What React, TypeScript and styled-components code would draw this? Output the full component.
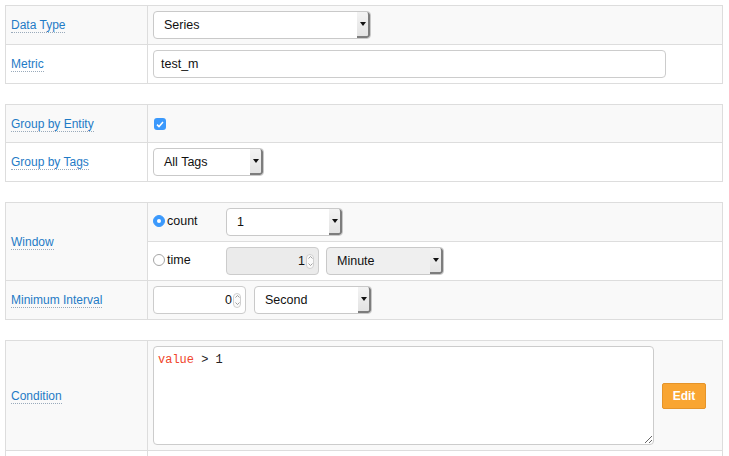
import styled, { createGlobalStyle } from "styled-components";

const GlobalStyle = createGlobalStyle`
  html, body {
    margin: 0;
    padding: 0;
    background: #ffffff;
    font-family: "Liberation Sans", Arial, sans-serif;
    font-size: 12px;
    color: #222;
  }
`;

const Page = styled.div`
  display: flex;
  flex-direction: column;
  gap: 20px;
  padding: 5px 6px 0 5px;
`;

const Table = styled.table`
  width: 100%;
  border-collapse: collapse;
  border: 1px solid #dddddd;
`;

const Row = styled.tr<{ $striped?: boolean }>`
  background: ${(p) => (p.$striped ? "#f9f9f9" : "#ffffff")};
`;

const LabelCell = styled.td`
  width: 131px;
  padding: 5px;
  border: 1px solid #dddddd;
  vertical-align: middle;
`;

const ValueCell = styled.td<{ $height?: number }>`
  padding: 5px;
  border: 1px solid #dddddd;
  vertical-align: middle;
  height: ${(p) => p.$height ?? 28}px;
`;

const Label = styled.span`
  color: #1f7bc6;
  border-bottom: 1px dotted #9ab;
  cursor: help;
`;

const Inline = styled.div<{ $gap?: number }>`
  display: flex;
  align-items: center;
  gap: ${(p) => p.$gap ?? 8}px;
`;

const SelectBox = styled.div<{ $width: number; $disabled?: boolean }>`
  width: ${(p) => p.$width}px;
  height: 28px;
  box-sizing: border-box;
  display: flex;
  align-items: stretch;
  border: 1px solid #c9c9c9;
  border-radius: 4px;
  background: ${(p) => (p.$disabled ? "#efefef" : "#ffffff")};
  overflow: hidden;
`;

const SelectText = styled.span`
  flex: 1;
  display: flex;
  align-items: center;
  padding-left: 10px;
  font-size: 12.5px;
  color: #111;
`;

const SelectArrow = styled.span`
  width: 11px;
  display: flex;
  align-items: center;
  justify-content: center;
  background: linear-gradient(#f3f3f3, #e3e3e3);
  border-right: 2px solid #7d7d7d;
  border-bottom: 2px solid #7d7d7d;
  border-radius: 0 3px 3px 0;

  &::after {
    content: "";
    border-left: 3px solid transparent;
    border-right: 3px solid transparent;
    border-top: 4px solid #111;
  }
`;

const TextInput = styled.div<{ $width: number }>`
  width: ${(p) => p.$width}px;
  height: 28px;
  box-sizing: border-box;
  display: flex;
  align-items: center;
  padding-left: 7px;
  border: 1px solid #cccccc;
  border-radius: 4px;
  background: #fff;
  font-size: 12.5px;
  color: #111;
`;

const NumberBox = styled.div<{ $width: number; $disabled?: boolean }>`
  width: ${(p) => p.$width}px;
  height: 28px;
  box-sizing: border-box;
  display: flex;
  align-items: center;
  justify-content: flex-end;
  gap: 1px;
  padding-right: 4px;
  border: 1px solid #cccccc;
  border-radius: 4px;
  background: ${(p) => (p.$disabled ? "#ebebeb" : "#ffffff")};
  font-size: 12.5px;
  color: #111;
`;

const Spinner = styled.span`
  width: 8px;
  height: 15px;
  box-sizing: border-box;
  border: 1px solid #d0d0d0;
  border-radius: 4px;
  display: flex;
  flex-direction: column;
  align-items: center;
  justify-content: space-around;
  background: #fafafa;
`;

const CheckBox = styled.span`
  width: 12px;
  height: 12px;
  border-radius: 3px;
  background: #3b99fc;
  display: inline-flex;
  align-items: center;
  justify-content: center;
  margin-left: 1px;
  vertical-align: middle;
`;

const RadioOption = styled.label`
  width: 73px;
  display: flex;
  align-items: center;
  gap: 2px;
  font-size: 12.5px;
  color: #111;
  margin-top: -3px;
`;

const RadioDot = styled.span<{ $checked?: boolean }>`
  width: 12px;
  height: 12px;
  box-sizing: border-box;
  border-radius: 50%;
  border: 1px solid ${(p) => (p.$checked ? "#3b99fc" : "#a5a5a5")};
  background: ${(p) => (p.$checked ? "#3b99fc" : "#ffffff")};
  display: flex;
  align-items: center;
  justify-content: center;

  &::after {
    content: "";
    width: 4px;
    height: 4px;
    border-radius: 50%;
    background: ${(p) => (p.$checked ? "#ffffff" : "transparent")};
  }
`;

const CodeArea = styled.div`
  width: 501px;
  height: 99px;
  box-sizing: border-box;
  padding: 6px 4px;
  border: 1px solid #cccccc;
  border-radius: 4px;
  background: #fff;
  font-family: "Liberation Mono", "Courier New", monospace;
  font-size: 12px;
  color: #222;
  resize: both;
  overflow: auto;
`;

const Keyword = styled.span`
  color: #f0452b;
`;

const EditButton = styled.button`
  width: 44px;
  height: 26px;
  border: 1px solid #e5942a;
  border-radius: 2px;
  background: #f9a532;
  color: #ffffff;
  font-family: "Liberation Sans", Arial, sans-serif;
  font-weight: 700;
  font-size: 12px;
  padding: 0;
`;

const SpinArrows = () => (
  <Spinner>
    <svg width="5" height="3" viewBox="0 0 5 3">
      <path d="M0.5 2.5 L2.5 0.5 L4.5 2.5" fill="none" stroke="#888" strokeWidth="0.8" />
    </svg>
    <svg width="5" height="3" viewBox="0 0 5 3">
      <path d="M0.5 0.5 L2.5 2.5 L4.5 0.5" fill="none" stroke="#888" strokeWidth="0.8" />
    </svg>
  </Spinner>
);

const Select = ({ value, width, disabled }: { value: string; width: number; disabled?: boolean }) => (
  <SelectBox $width={width} $disabled={disabled}>
    <SelectText>{value}</SelectText>
    <SelectArrow />
  </SelectBox>
);

const NumberInput = ({ value, width, disabled }: { value: string; width: number; disabled?: boolean }) => (
  <NumberBox $width={width} $disabled={disabled}>
    {value}
    <SpinArrows />
  </NumberBox>
);

const App = () => (
  <>
    <GlobalStyle />
    <Page>
      <Table>
        <tbody>
          <Row $striped>
            <LabelCell><Label>Data Type</Label></LabelCell>
            <ValueCell><Select value="Series" width={218} /></ValueCell>
          </Row>
          <Row>
            <LabelCell><Label>Metric</Label></LabelCell>
            <ValueCell><TextInput $width={513}>test_m</TextInput></ValueCell>
          </Row>
        </tbody>
      </Table>

      <Table>
        <tbody>
          <Row $striped>
            <LabelCell><Label>Group by Entity</Label></LabelCell>
            <ValueCell $height={27}>
              <CheckBox>
                <svg width="8" height="7" viewBox="0 0 8 7">
                  <path d="M1 3.6 L3 5.6 L7 1" fill="none" stroke="#fff" strokeWidth="1.5" />
                </svg>
              </CheckBox>
            </ValueCell>
          </Row>
          <Row>
            <LabelCell><Label>Group by Tags</Label></LabelCell>
            <ValueCell><Select value="All Tags" width={111} /></ValueCell>
          </Row>
        </tbody>
      </Table>

      <Table>
        <tbody>
          <Row $striped>
            <LabelCell rowSpan={2}><Label>Window</Label></LabelCell>
            <ValueCell>
              <Inline $gap={0}>
                <RadioOption><RadioDot $checked />count</RadioOption>
                <Select value="1" width={117} />
              </Inline>
            </ValueCell>
          </Row>
          <Row>
            <ValueCell>
              <Inline $gap={0}>
                <RadioOption><RadioDot />time</RadioOption>
                <Inline $gap={7}>
                  <NumberInput value="1" width={93} disabled />
                  <Select value="Minute" width={118} disabled />
                </Inline>
              </Inline>
            </ValueCell>
          </Row>
          <Row $striped>
            <LabelCell><Label>Minimum Interval</Label></LabelCell>
            <ValueCell>
              <Inline $gap={8}>
                <NumberInput value="0" width={93} />
                <Select value="Second" width={118} />
              </Inline>
            </ValueCell>
          </Row>
        </tbody>
      </Table>

      <Table>
        <tbody>
          <Row $striped>
            <LabelCell><Label>Condition</Label></LabelCell>
            <ValueCell>
              <Inline $gap={8}>
                <CodeArea>
                  <Keyword>value</Keyword> &gt; 1
                </CodeArea>
                <EditButton>Edit</EditButton>
              </Inline>
            </ValueCell>
          </Row>
          <Row>
            <LabelCell />
            <ValueCell />
          </Row>
        </tbody>
      </Table>
    </Page>
  </>
);

export default App;
